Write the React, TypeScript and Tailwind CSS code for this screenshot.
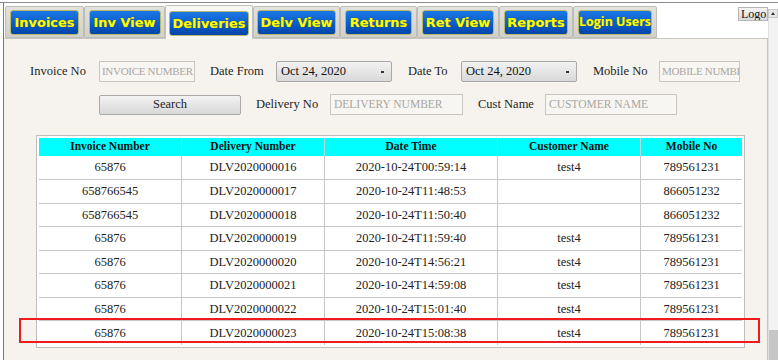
import React from "react";

const tabs = [
  { label: "Invoices", w: 79, bw: 69 },
  { label: "Inv View", w: 81, bw: 72 },
  { label: "Deliveries", w: 88, bw: 80, sel: true },
  { label: "Delv View", w: 87, bw: 79 },
  { label: "Returns", w: 77, bw: 67 },
  { label: "Ret View", w: 82, bw: 72 },
  { label: "Reports", w: 74, bw: 64 },
  { label: "Login Users", w: 84, bw: 74, alt: true },
];

const rows = [
  ["65876", "DLV2020000016", "2020-10-24T00:59:14", "test4", "789561231", 24],
  ["658766545", "DLV2020000017", "2020-10-24T11:48:53", "", "866051232", 24],
  ["658766545", "DLV2020000018", "2020-10-24T11:50:40", "", "866051232", 23],
  ["65876", "DLV2020000019", "2020-10-24T11:59:40", "test4", "789561231", 24],
  ["65876", "DLV2020000020", "2020-10-24T14:56:21", "test4", "789561231", 23],
  ["65876", "DLV2020000021", "2020-10-24T14:59:08", "test4", "789561231", 24],
  ["65876", "DLV2020000022", "2020-10-24T15:01:40", "test4", "789561231", 23],
  ["65876", "DLV2020000023", "2020-10-24T15:08:38", "test4", "789561231", 24],
];

const cols = ["w-[143px]", "w-[143px]", "w-[173px]", "w-[143px]", "w-[101px]"];
const headers = ["Invoice Number", "Delivery Number", "Date Time", "Customer Name", "Mobile No"];

const serif = { fontFamily: '"Liberation Serif", "Times New Roman", serif' };

function Input({ w, ph, tight }: { w: string; ph: string; tight?: boolean }) {
  return (
    <div
      className={`${w} h-[21px] border border-[#c9c6c0] bg-[#f8f6f2] flex items-center overflow-hidden whitespace-nowrap text-[#a9a6a2] ${
        tight ? "text-[11px] tracking-[-0.3px] pl-[2px]" : "text-[11.5px] pl-[3px]"
      }`}
    >
      {ph}
    </div>
  );
}

function Select({ w }: { w: string }) {
  return (
    <div
      className={`${w} h-[21px] border border-[#a9a9a9] rounded-[2px] bg-gradient-to-b from-[#f2f2f2] to-[#d9d9d9] flex items-center justify-between pl-[4px] pr-[7px] text-[12.5px] text-[#111]`}
    >
      <span>Oct 24, 2020</span>
      <span className="w-[3px] h-[2px] bg-[#333]" />
    </div>
  );
}

export default function App() {
  return (
    <div className="w-[778px] h-[360px] overflow-hidden bg-white relative" style={serif}>
      <div className="mt-[2px] border-t border-[#8c8c8c] flex h-[358px]">
        <div className="w-[3px]" />
        <div className="w-[765px] border-l border-[#7a7a7a] flex flex-col">
          {/* Tab strip */}
          <div className="h-[35px] flex items-end pl-[1px] relative">
            {tabs.map((t) => (
              <div
                key={t.label}
                style={{ width: t.w }}
                className={
                  t.sel
                    ? "h-[34px] bg-[#f7f6f3] border border-b-0 border-[#c3c1bb] rounded-t-[2px] flex justify-center pt-[5px] relative z-10 -mb-px"
                    : "h-[32px] bg-gradient-to-b from-[#e4e2dd] to-[#d2d0ca] border border-[#bebcb6] rounded-t-[2px] flex justify-center pt-[3px]"
                }
              >
                <div
                  style={{ width: t.bw }}
                  className="h-[25px] rounded-[3px] border border-[#b8b86a] bg-gradient-to-b from-[#1b78e3] via-[#0a5fcf] to-[#0345a8] flex items-center justify-center"
                >
                  <span
                    className={`text-[#ffff00] whitespace-nowrap font-bold ${t.alt ? "text-[12.5px]" : "text-[13px]"}`}
                    style={{
                      fontFamily: t.alt ? '"Open Sans", sans-serif' : '"DejaVu Sans", Verdana, sans-serif',
                      textShadow: "0 0 1px #6b6b00",
                    }}
                  >
                    {t.label}
                  </span>
                </div>
              </div>
            ))}
            <div className="flex-1" />
            <div className="self-start mt-[4px] h-[14px] w-[30px] border border-[#b5b5b5] bg-gradient-to-b from-[#f4f4f4] to-[#dcdcdc] text-[12px] leading-[12px] text-[#111] pl-[2px] overflow-hidden">
              Logo
            </div>
          </div>

          {/* Content panel */}
          <div className="flex-1 bg-[#f6f3ee] border-t border-r border-[#c8c6c0] relative">
            {/* Row 1 */}
            <div className="flex items-center mt-[22px] pl-[26px] text-[12.5px] text-[#1e1e1e]">
              <span className="w-[69px]">Invoice No</span>
              <Input w="w-[96px]" ph="INVOICE NUMBER" tight />
              <span className="ml-[15px] w-[66px]">Date From</span>
              <Select w="w-[116px]" />
              <span className="ml-[16px] w-[53px]">Date To</span>
              <Select w="w-[116px]" />
              <span className="ml-[16px] w-[66px]">Mobile No</span>
              <Input w="w-[81px]" ph="MOBILE NUMBE" tight />
            </div>
            {/* Row 2 */}
            <div className="flex items-center mt-[12px] pl-[95px] text-[12.5px] text-[#1e1e1e]">
              <div className="w-[142px] h-[20px] border border-[#a9a9a9] rounded-[2px] bg-gradient-to-b from-[#f3f3f3] to-[#d8d8d8] flex items-center justify-center">
                Search
              </div>
              <span className="ml-[15px] w-[74px]">Delivery No</span>
              <Input w="w-[133px]" ph="DELIVERY NUMBER" />
              <span className="ml-[15px] w-[67px]">Cust Name</span>
              <Input w="w-[132px]" ph="CUSTOMER NAME" />
            </div>

            {/* Table */}
            <div className="ml-[32px] mt-[20px] w-[709px] h-[213px] border border-[#bdbdbd] bg-white p-[2px]">
              <div className="flex h-[18px] bg-[#00ffff]">
                {headers.map((h, i) => (
                  <div
                    key={h}
                    className={`${cols[i]} ${i < 4 ? "border-r border-[#b9d9d9]" : ""} flex items-center justify-center text-[11.5px] font-bold text-[#111]`}
                  >
                    {h}
                  </div>
                ))}
              </div>
              {rows.map((r, ri) => (
                <div
                  key={ri}
                  className={`flex ${ri < 7 ? "border-b border-[#c6c6c6]" : ""}`}
                  style={{ height: r[5] as number }}
                >
                  {r.slice(0, 5).map((c, i) => (
                    <div
                      key={i}
                      className={`${cols[i]} ${i < 4 ? "border-r border-[#c6c6c6]" : ""} flex items-center justify-center text-[12.5px] text-[#222]`}
                    >
                      {c as string}
                    </div>
                  ))}
                </div>
              ))}
            </div>
          </div>
        </div>
        {/* Scrollbar */}
        <div className="w-[10px] flex flex-col pt-[6px]">
          <div className="h-[9px] bg-[#e8e8e8] border border-[#c8c8c8] flex items-center justify-center">
            <div className="w-0 h-0 border-l-[2px] border-r-[2px] border-b-[3px] border-l-transparent border-r-transparent border-b-[#333]" />
          </div>
          <div className="flex-1 bg-[#f3f3f3] border-l border-[#e0e0e0] flex flex-col justify-end">
            <div className="h-[30px] bg-[#c6c6c6]" />
          </div>
        </div>
      </div>

      {/* Red highlight */}
      <div className="absolute left-[19px] top-[318px] w-[741px] h-[25px] border-2 border-[#ee1c1c] pointer-events-none" />
    </div>
  );
}
